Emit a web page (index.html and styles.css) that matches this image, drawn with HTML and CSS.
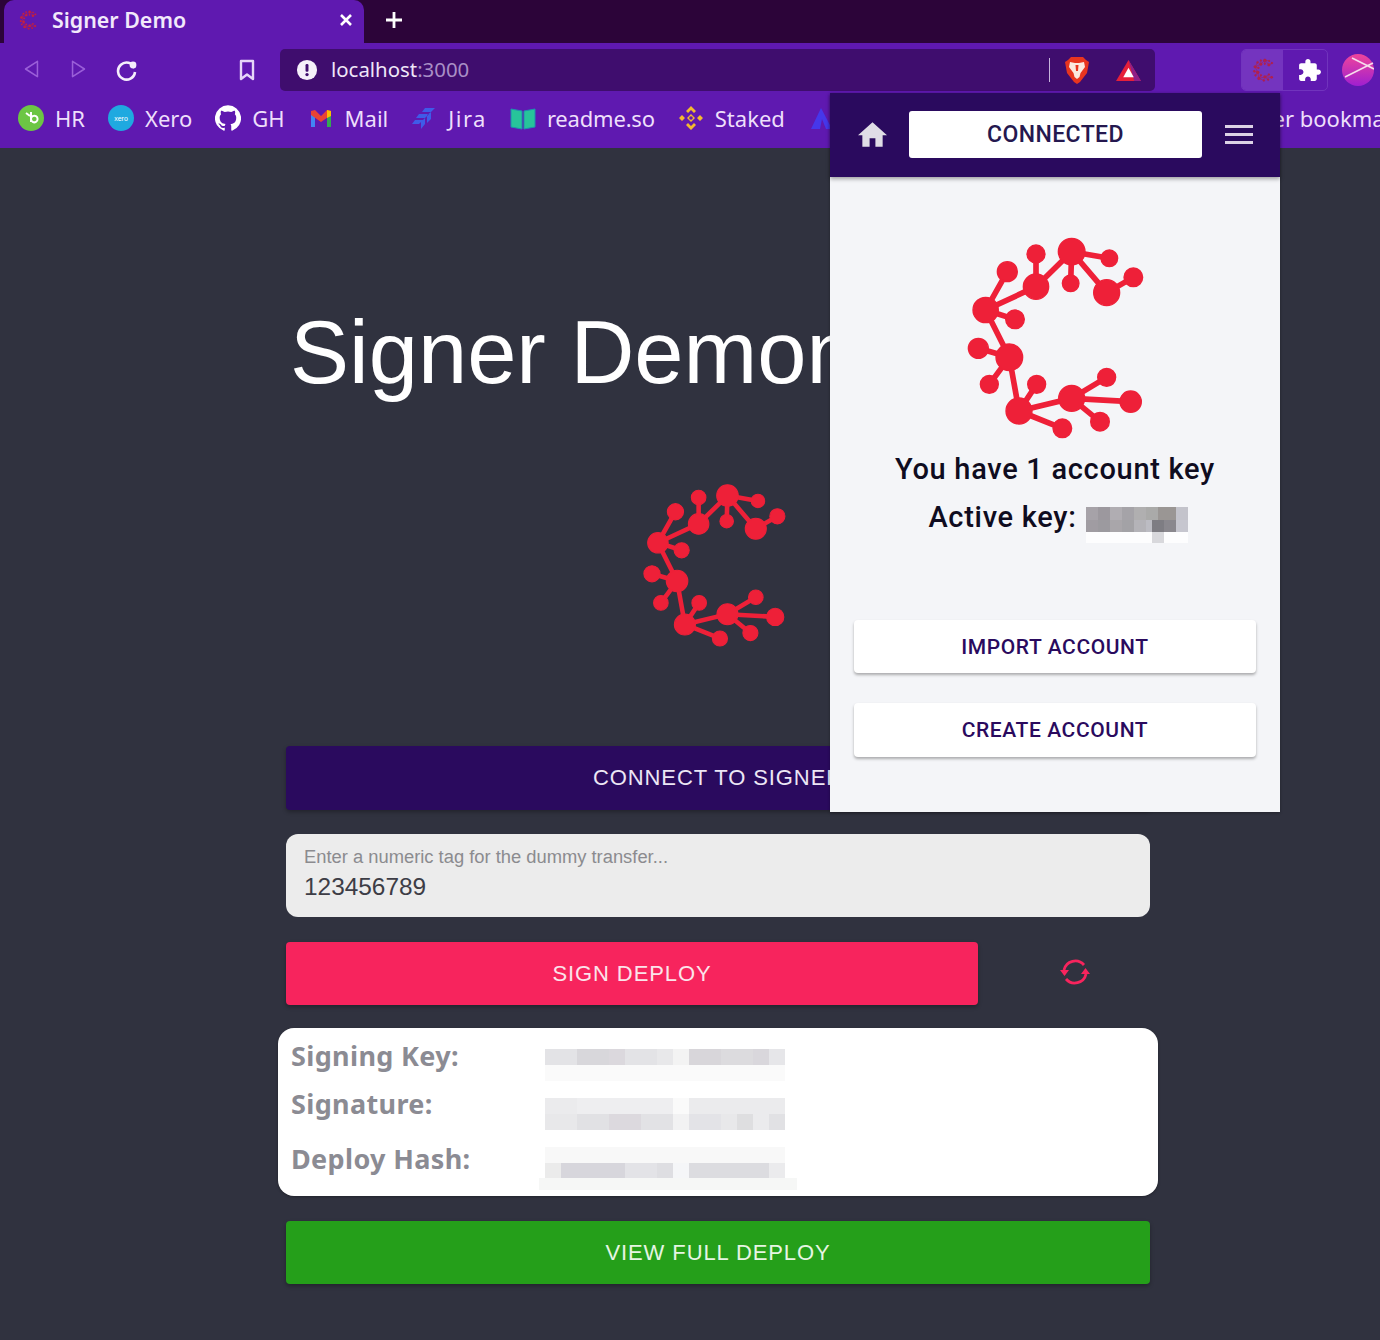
FILE: index.html
```html
<!DOCTYPE html>
<html lang="en">
<head>
<meta charset="utf-8">
<title>Signer Demo</title>
<link rel="stylesheet" href="styles.css">
</head>
<body>
<svg class="defs" width="0" height="0" aria-hidden="true">
  <symbol id="logo" viewBox="0 0 630 675">
    <g stroke="currentColor" stroke-width="17" fill="none">
      <path d="M365 80L478 100M365 80L362 175M365 80L470 203L550 157M365 80L258 185L107 255M258 87L258 185M172 140L107 255L195 283M107 255L178 397L85 370M178 397L118 478M178 397L207 558L260 478M207 558L337 610M207 558L365 520L470 457M365 520L542 530M365 520L450 590"/>
    </g>
    <g fill="currentColor" stroke="currentColor" stroke-width="4">
      <circle cx="365" cy="80" r="40"/><circle cx="478" cy="100" r="25"/><circle cx="362" cy="175" r="25"/><circle cx="470" cy="203" r="39"/><circle cx="550" cy="157" r="28"/><circle cx="258" cy="87" r="27"/><circle cx="258" cy="185" r="38"/><circle cx="172" cy="140" r="30"/><circle cx="107" cy="255" r="38"/><circle cx="195" cy="283" r="28"/><circle cx="85" cy="370" r="30"/><circle cx="178" cy="397" r="40"/><circle cx="118" cy="478" r="27"/><circle cx="260" cy="478" r="27"/><circle cx="207" cy="558" r="39"/><circle cx="337" cy="610" r="28"/><circle cx="365" cy="520" r="39"/><circle cx="470" cy="457" r="27"/><circle cx="542" cy="530" r="32"/><circle cx="450" cy="590" r="28"/>
    </g>
  </symbol>
</svg>

<header class="chrome">
  <div class="tabstrip">
    <div class="tab">
      <svg class="tab-fav" viewBox="0 0 630 675"><use href="#logo"/></svg>
      <span class="tab-title">Signer Demo</span>
      <svg class="tab-close" viewBox="0 0 14 14"><path d="M2 2L12 12M12 2L2 12"/></svg>
    </div>
    <svg class="tab-new" viewBox="0 0 20 20"><path d="M10 2V18M2 10H18"/></svg>
  </div>

  <div class="toolbar">
    <svg class="nav nav-off" viewBox="0 0 20 24"><path d="M17 3L3 12L17 21Z"/></svg>
    <svg class="nav nav-off nav-fwd" viewBox="0 0 20 24"><path d="M3 3L17 12L3 21Z"/></svg>
    <svg class="nav nav-reload" viewBox="0 0 24 24"><path d="M19.5 10A8.5 8.5 0 1 0 20 14"/><circle class="dot" cx="18" cy="7" r="3.4"/></svg>
    <svg class="nav nav-mark" viewBox="0 0 18 24"><path d="M3 3H15V21L9 16.5L3 21Z"/></svg>
    <div class="omnibox">
      <svg class="info" viewBox="0 0 24 24"><circle cx="12" cy="12" r="11"/><rect class="ink" x="10.4" y="5.5" width="3.2" height="8.5" rx="1.2"/><circle class="ink" cx="12" cy="17" r="1.8"/></svg>
      <span class="url">localhost<span class="port">:3000</span></span>
      <span class="omni-sep"></span>
      <svg class="brave" viewBox="0 0 24 28"><path class="brave-bg" d="M6 1H18L21 4L24 6L22 17L15 26L12 28L9 26L2 17L0 6L3 4Z"/><path class="brave-face" d="M5 6L10 7H14L19 6L20 11L15.500 17L14.500 21L12 23L9.500 21L8.500 17L4 11Z"/><path class="brave-nose" d="M10.500 9H13.500L13 15H11Z"/></svg>
      <svg class="bat" viewBox="0 0 28 24"><path class="bat-r" d="M14 1L27 23H1Z"/><path class="bat-p" d="M14 1L27 23H20Z"/><path class="bat-w" d="M14 9L19.500 19H8.500Z"/></svg>
    </div>
    <div class="ext-group">
      <span class="ext-active"><svg class="ext-c" viewBox="0 0 630 675"><use href="#logo"/></svg></span>
      <span class="ext-puzzle"><svg viewBox="0 0 24 24"><path d="M20.500 11H19V7c0-1.100-.9-2-2-2h-4V3.500C13 2.120 11.880 1 10.500 1S8 2.120 8 3.500V5H4c-1.100 0-1.990.9-1.990 2v3.800H3.500c1.490 0 2.700 1.210 2.700 2.700s-1.210 2.700-2.700 2.700H2V20c0 1.100.9 2 2 2h3.800v-1.500c0-1.490 1.210-2.700 2.700-2.700 1.490 0 2.700 1.210 2.700 2.700V22H17c1.100 0 2-.9 2-2v-4h1.500c1.380 0 2.500-1.120 2.500-2.500S21.880 11 20.500 11z"/></svg></span>
    </div>
    <svg class="avatar" viewBox="0 0 32 32">
      <defs><linearGradient id="avatarFill" x1="0" y1="0" x2="0" y2="1"><stop offset="0" stop-color="#f0459a"/><stop offset="1" stop-color="#a01fd0"/></linearGradient></defs>
      <circle cx="16" cy="16" r="16" fill="url(#avatarFill)"/>
      <path d="M3 23L31 9M10 4L32 15" stroke="#f7dcec" stroke-width="1.600" fill="none"/>
    </svg>
  </div>

  <nav class="bookmarks">
    <a class="bm"><svg class="bm-ico" viewBox="0 0 26 26"><circle cx="13" cy="13" r="13" fill="#6cc644"/><path d="M8 8L12 11M13 7V17M13 14A3.300 3.300 0 1 1 13 14.100" stroke="#fff" stroke-width="2" fill="none"/></svg>HR</a>
    <a class="bm"><svg class="bm-ico" viewBox="0 0 26 26"><circle cx="13" cy="13" r="13" fill="#1fa9e0"/><text class="xero-t" x="13" y="16" text-anchor="middle">xero</text></svg>Xero</a>
    <a class="bm"><svg class="bm-ico" viewBox="0 0 24 24"><path fill="#fff" d="M12 .3a12 12 0 0 0-3.800 23.400c.6.1.8-.3.8-.6v-2c-3.300.7-4-1.600-4-1.600-.6-1.400-1.400-1.800-1.400-1.800-1-.7.1-.7.1-.7 1.200 0 1.900 1.200 1.900 1.200 1 1.800 2.800 1.300 3.500 1 0-.8.4-1.300.7-1.600-2.700-.3-5.500-1.300-5.500-6 0-1.200.5-2.300 1.300-3.100-.2-.4-.6-1.600 0-3.200 0 0 1-.3 3.400 1.200a11.500 11.500 0 0 1 6 0c2.300-1.500 3.300-1.200 3.300-1.200.6 1.600.2 2.800 0 3.200.9.8 1.300 1.900 1.300 3.200 0 4.600-2.800 5.600-5.500 5.900.5.4.9 1 .9 2.200v3.300c0 .3.1.7.8.6A12 12 0 0 0 12 .3"/></svg>GH</a>
    <a class="bm"><svg class="bm-ico" viewBox="0 0 26 26"><path d="M3 6V22H7V11Z" fill="#4285f4"/><path d="M23 6V22H19V11Z" fill="#34a853"/><path d="M3 6L7 5L13 11L19 5L23 6V10L13 17L3 10Z" fill="#ea4335"/><path d="M19 5L23 6V11L19 13Z" fill="#fbbc04"/></svg>Mail</a>
    <a class="bm bm-jira"><svg class="bm-ico" viewBox="0 0 26 26"><path d="M24 3H14L11 7H20ZM18 9H8L5 13H14ZM12 15H4L1 19H8ZM20 7V14L16 18V10ZM14 13V19L10 24V17Z" fill="#3f5be8"/></svg>Jira</a>
    <a class="bm bm-readme"><svg class="bm-ico" viewBox="0 0 26 26"><path d="M1 4L12 6V24L1 22ZM25 4L14 6V24L25 22Z" fill="#27c49a" stroke="#1f8fb0" stroke-width="1"/></svg>readme.so</a>
    <a class="bm"><svg class="bm-ico" viewBox="0 0 26 26"><path d="M13 1L18 6L16 8L13 5L10 8L8 6ZM1 13L4 10L7 13L4 16ZM25 13L22 10L19 13L22 16ZM13 25L18 20L16 18L13 21L10 18L8 20ZM13 9L17 13L13 17L9 13Z" fill="#f3ba2f"/><circle cx="13" cy="13" r="1.800" fill="#5f19b0"/></svg>Staked</a>
    <a class="bm bm-hidden"><svg class="bm-ico" viewBox="0 0 26 26"><path d="M13 3L24 24H18L14 14L12 24H3Z" fill="#4637ea"/></svg></a>
    <a class="bm bm-other">Other bookmarks</a>
  </nav>
</header>

<main class="page">
  <h1 class="title">Signer Demon</h1>
  <svg class="hero-logo" viewBox="0 0 630 675"><use href="#logo"/></svg>
  <button class="btn btn-connect">CONNECT TO SIGNER</button>
  <div class="field">
    <label class="field-label">Enter a numeric tag for the dummy transfer...</label>
    <div class="field-value">123456789</div>
  </div>
  <div class="sign-row">
    <button class="btn btn-sign">SIGN DEPLOY</button>
    <svg class="sync" viewBox="0 0 32 32"><path d="M5 14A11.500 11.500 0 0 1 25 9M27 18A11.500 11.500 0 0 1 7 23"/><path class="sync-head" d="M1 14H10L5.500 20ZM31 18H22L26.500 12Z"/></svg>
  </div>
  <section class="card">
    <div class="kv kv-a">
      <span class="k">Signing Key:</span>
      <svg class="blur" width="240" height="32" viewBox="0 0 240 32" shape-rendering="crispEdges">
        <rect width="32" height="16" fill="#e3e3e6"/><rect x="32" width="32" height="16" fill="#d8d7db"/><rect x="64" width="16" height="16" fill="#dbd8dd"/><rect x="80" width="32" height="16" fill="#e3e3e6"/><rect x="112" width="16" height="16" fill="#e8e8ea"/><rect x="128" width="16" height="16" fill="#f3f3f3"/><rect x="144" width="32" height="16" fill="#d8d6da"/><rect x="176" width="32" height="16" fill="#dcdbde"/><rect x="208" width="16" height="16" fill="#d9d7dc"/><rect x="224" width="16" height="16" fill="#e6e6e9"/>
        <rect y="16" width="240" height="16" fill="#fafafa"/>
      </svg>
    </div>
    <div class="kv kv-b">
      <span class="k">Signature:</span>
      <svg class="blur" width="240" height="32" viewBox="0 0 240 32" shape-rendering="crispEdges">
        <rect width="32" height="16" fill="#ebebed"/><rect x="32" width="96" height="16" fill="#eeeef0"/><rect x="128" width="16" height="16" fill="#fafafa"/><rect x="144" width="96" height="16" fill="#ebebed"/>
        <rect y="16" width="32" height="16" fill="#e8e8ea"/><rect x="32" y="16" width="32" height="16" fill="#e1e1e4"/><rect x="64" y="16" width="32" height="16" fill="#dcd9de"/><rect x="96" y="16" width="32" height="16" fill="#e2e2e5"/><rect x="128" y="16" width="16" height="16" fill="#f2f2f3"/><rect x="144" y="16" width="32" height="16" fill="#e3e3e7"/><rect x="176" y="16" width="16" height="16" fill="#e8e8ea"/><rect x="192" y="16" width="16" height="16" fill="#dedee0"/><rect x="208" y="16" width="16" height="16" fill="#ebebed"/><rect x="224" y="16" width="16" height="16" fill="#e1e1e4"/>
      </svg>
    </div>
    <div class="kv kv-c">
      <span class="k">Deploy Hash:</span>
      <svg class="blur blur-wide" width="258" height="43" viewBox="0 0 258 43" shape-rendering="crispEdges">
        <rect x="6" width="240" height="16" fill="#f8f8f8"/>
        <rect x="6" y="16" width="16" height="15" fill="#ebebeb"/><rect x="22" y="16" width="64" height="15" fill="#d7d6dc"/><rect x="86" y="16" width="32" height="15" fill="#e3e3e7"/><rect x="118" y="16" width="16" height="15" fill="#dedee2"/><rect x="134" y="16" width="16" height="15" fill="#f5f6f8"/><rect x="150" y="16" width="80" height="15" fill="#dcdce0"/><rect x="230" y="16" width="16" height="15" fill="#ebebed"/>
        <rect y="31" width="258" height="12" fill="#f6f7f6"/>
      </svg>
    </div>
  </section>
  <button class="btn btn-view">VIEW FULL DEPLOY</button>
</main>

<aside class="popup">
  <div class="popup-head">
    <svg class="home" viewBox="2 3 20 17"><path d="M10 20v-6h4v6h5v-8h3L12 3 2 12h3v8z"/></svg>
    <div class="status">CONNECTED</div>
    <div class="burger"><span></span><span></span><span></span></div>
  </div>
  <div class="popup-body">
    <svg class="popup-logo" viewBox="0 0 630 675"><use href="#logo"/></svg>
    <p class="line line-1">You have 1 account key</p>
    <div class="line line-2">Active key:
      <svg class="key-blur" width="102" height="36" viewBox="0 0 102 36" shape-rendering="crispEdges">
        <rect width="12" height="13" fill="#a6a2a8"/><rect x="12" width="12" height="13" fill="#9c989e"/><rect x="24" width="12" height="13" fill="#b0adb2"/><rect x="36" width="12" height="13" fill="#a5a3a8"/><rect x="48" width="12" height="13" fill="#b0afb0"/><rect x="60" width="12" height="13" fill="#aaaaa9"/><rect x="72" width="18" height="13" fill="#9a9694"/><rect x="90" width="12" height="13" fill="#c3c3cb"/>
        <rect y="13" width="12" height="12" fill="#a09ca2"/><rect x="12" y="13" width="12" height="12" fill="#9c9a9f"/><rect x="24" y="13" width="12" height="12" fill="#a9a6aa"/><rect x="36" y="13" width="12" height="12" fill="#a3a2a6"/><rect x="48" y="13" width="12" height="12" fill="#b4b3b8"/><rect x="60" y="13" width="12" height="12" fill="#bcbcc3"/><rect x="66" y="13" width="12" height="12" fill="#7e7d83"/><rect x="78" y="13" width="12" height="12" fill="#8a888e"/><rect x="90" y="13" width="12" height="12" fill="#c6c6cf"/>
        <rect y="25" width="102" height="11" fill="#fdfdfe"/><rect x="66" y="25" width="12" height="11" fill="#d8d8dc"/>
      </svg>
    </div>
    <button class="pbtn pbtn-import">IMPORT ACCOUNT</button>
    <button class="pbtn pbtn-create">CREATE ACCOUNT</button>
  </div>
</aside>
</body>
</html>
```

FILE: styles.css
```css
* { box-sizing: border-box; }
html, body { margin: 0; padding: 0; }
body {
  width: 1380px;
  height: 1340px;
  overflow: hidden;
  position: relative;
  background: #30323f;
  font-family: "Liberation Sans", Arial, sans-serif;
}
.defs { position: absolute; }
svg { display: block; flex: none; }

/* browser chrome */
.chrome { font-family: "Noto Sans", "Open Sans", sans-serif; color: #f0e6fb; }
.tabstrip { height: 43px; background: #2c0439; display: flex; align-items: center; padding-left: 4px; }
.tab {
  width: 360px; height: 43px; background: #5f19b0; border-radius: 10px 10px 0 0;
  display: flex; align-items: center; padding: 0 0 3px 14px;
}
.tab-fav { width: 20px; height: 22px; color: #c4203f; }
.tab-title { margin: 0 0 2px 14px; font-size: 21.4px; font-weight: 600; color: #f2e9fb; }
.tab-close { width: 14px; height: 14px; margin-left: auto; margin-right: 11px; stroke: #fff; stroke-width: 2.600; }
.tab-new { width: 20px; height: 20px; margin: 0 0 3px 20px; stroke: #fff; stroke-width: 2.800; }

.toolbar { height: 50px; background: #5f19b0; display: flex; align-items: flex-start; padding-top: 6px; position: relative; }
.nav { margin-top: 9px; fill: none; stroke-linejoin: round; }
.nav-off { width: 17px; height: 22px; stroke: #9a5fd8; stroke-width: 1.800; margin-left: 23px; }
.nav-fwd { margin-left: 30px; }
.nav-reload { width: 24px; height: 24px; margin-left: 28px; stroke: #f5eefc; stroke-width: 2.600; }
.dot { fill: #f5eefc; stroke: none; }
.nav-mark { width: 18px; height: 24px; margin-left: 99px; stroke: #e6d6f8; stroke-width: 2.400; }
.omnibox {
  width: 875px; height: 42px; margin-left: 24px; background: #3f0d6e; border-radius: 5px;
  display: flex; align-items: center; padding-left: 16px;
}
.info { width: 22px; height: 22px; fill: #f5f0fa; }
.ink { fill: #3f0d6e; }
.url { margin: 0 0 2px 13px; font-size: 20.4px; color: #efe6f8; }
.port { color: #a98fc6; }
.omni-sep { width: 1.5px; height: 24px; background: #c7b4dc; margin-left: auto; }
.brave { width: 24px; height: 28px; margin-left: 15px; }
.brave-bg { fill: #e8351f; }
.brave-face { fill: #fbe9df; }
.brave-nose { fill: #e8351f; }
.bat { width: 27px; height: 23px; margin-left: 26px; margin-right: 13px; }
.bat-r { fill: #e5203a; }
.bat-p { fill: #8f1f88; }
.bat-w { fill: #fff; }
.ext-group {
  width: 87px; height: 42px; margin-left: 86px; border: 1px solid #7134bd; border-radius: 5px;
  display: flex; overflow: hidden;
}
.ext-active { width: 41px; background: #7434bf; display: flex; align-items: center; justify-content: center; }
.ext-c { width: 24px; height: 26px; color: #b3204a; }
.ext-puzzle { flex: 1; display: flex; align-items: center; justify-content: center; padding-left: 8px; }
.ext-puzzle svg { width: 25px; height: 25px; fill: #fff; }
.avatar { width: 32px; height: 32px; margin-left: 14px; margin-top: 5px; }

.bookmarks {
  height: 55px; background: #5f19b0; display: flex; align-items: center; padding: 0 0 6px 18px;
  overflow: hidden; white-space: nowrap;
}
.bm { display: flex; align-items: center; font-size: 22px; color: #eedffb; margin-right: 23px; flex: none; }
.bm-ico { width: 26px; height: 26px; margin-right: 11px; }
.bm-jira { letter-spacing: 1.5px; }
.bm-readme { letter-spacing: -.2px; }
.xero-t { font-size: 7px; fill: #fff; font-family: "Liberation Sans", sans-serif; }
.bm-hidden { margin-right: 400px; }
.bm-hidden .bm-ico { margin-right: 0; }
.bm-other { margin-right: 0; }

/* page */
.page { padding-left: 286px; width: 1150px; display: flex; flex-direction: column; }
.title {
  margin: 153px 0 0 4px; height: 104px; line-height: 104px; font-size: 88.5px; font-weight: 400; color: #fff; white-space: nowrap;
}
.hero-logo { width: 170px; height: 182px; color: #ee2038; margin: 69px 0 0 343px; }
.btn {
  display: block; border: 0; border-radius: 4px; height: 63px; padding: 0; font-family: "Liberation Sans", Arial, sans-serif;
  font-size: 22px; letter-spacing: .9px; box-shadow: 0 2px 4px rgba(0,0,0,.3);
}
.btn-connect { width: 864px; margin-top: 90px; height: 64px; background: #2a0a5e; color: #ece6f5; }
.field { margin-top: 24px; width: 864px; height: 83px; border-radius: 12px; background: #ececec; padding: 12px 18px 0; }
.field-label { display: block; font-size: 18.35px; line-height: 22px; color: #8b8b8f; }
.field-value { font-size: 24.4px; line-height: 30px; margin-top: 4px; color: #3d3d46; }
.sign-row { display: flex; align-items: center; margin-top: 25px; }
.btn-sign { width: 692px; background: #f7245d; color: #fbe3ea; }
.sync { width: 32px; height: 32px; margin: 0 0 4px 81px; fill: none; stroke: #f7245d; stroke-width: 2.800; }
.sync-head { fill: #f7245d; stroke: none; }
.card {
  margin: 23px 0 25px -8px; width: 880px; height: 168px; background: #fff; border-radius: 16px; padding: 11px 0 0 13px;
  box-shadow: 0 1px 3px rgba(0,0,0,.3);
}
.kv { display: flex; align-items: flex-start; }
.k { width: 254px; height: 34px; line-height: 34px; font-family: "Noto Sans", sans-serif; font-weight: 700; font-size: 27px; letter-spacing: .35px; color: #8b8b93; white-space: nowrap; }
.kv-a { height: 48px; }
.kv-a .blur { margin-top: 10px; }
.kv-b { height: 55px; }
.kv-b .blur { margin-top: 11px; }
.kv-c .blur { margin-top: 5px; }
.blur-wide { margin-left: -6px; }
.btn-view { width: 864px; background: #259f1a; color: #e6f5e3; }

/* extension popup, lying over the page */
.popup {
  position: absolute; left: 830px; top: 93px; width: 450px; height: 719px; background: #f4f5f8;
  font-family: Roboto, sans-serif; box-shadow: 0 1px 3px rgba(0,0,0,.3);
}
.popup-head { height: 84px; background: #2a0a5e; display: flex; align-items: center; padding: 0 0 2px 28px; box-shadow: 0 2px 4px rgba(0,0,0,.35); position: relative; }
.home { width: 29px; height: 25px; fill: #e0dde6; }
.status {
  width: 293px; height: 47px; margin-left: 22px; background: #fff; border-radius: 3px;
  display: flex; align-items: center; justify-content: center; font-size: 23px; font-weight: 500; letter-spacing: .4px; color: #25184f;
}
.burger { width: 28px; margin-left: 23px; display: flex; flex-direction: column; gap: 5px; }
.burger span { display: block; height: 3px; background: #dcd3e6; }
.popup-body { display: flex; flex-direction: column; align-items: center; padding-top: 48px; }
.popup-logo { width: 210px; height: 225px; color: #ee2038; }
.line { margin: 0; font-size: 29px; font-weight: 500; line-height: 36px; letter-spacing: .7px; color: #0f0c20; white-space: nowrap; }
.line-1 { margin-top: 1px; }
.line-2 { margin-top: 12px; height: 36px; display: flex; align-items: center; gap: 9px; padding-left: 6px; }
.key-blur { margin-top: 16px; }
.pbtn {
  width: 402px; height: 53px; border: 0; border-radius: 4px; background: #fff; padding: 0;
  font-family: Roboto, sans-serif; font-size: 21px; font-weight: 500; letter-spacing: .6px; color: #2a0a5e;
  box-shadow: 0 2px 3px rgba(0,0,0,.3);
}
.pbtn-import { margin-top: 85px; }
.pbtn-create { margin-top: 30px; height: 54px; }
```
